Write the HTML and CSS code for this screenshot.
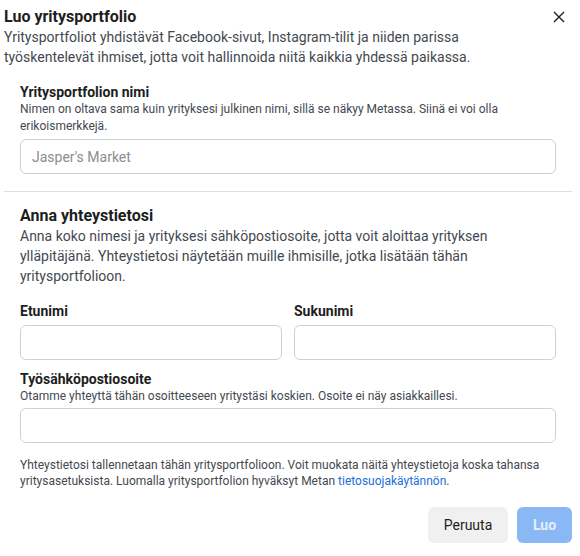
FILE: index.html
```html
<!DOCTYPE html>
<html lang="fi">
<head>
<meta charset="utf-8">
<link rel="stylesheet" href="styles.css">
</head>
<body>
<div class="dialog">
  <div class="header">
    <div class="header-text">
      <h1 class="title">Luo yritysportfolio</h1>
      <p class="lead">Yritysportfoliot yhdistävät Facebook-sivut, Instagram-tilit ja niiden parissa työskentelevät ihmiset, jotta voit hallinnoida niitä kaikkia yhdessä paikassa.</p>
    </div>
    <button class="close" aria-label="Sulje">
      <svg width="12" height="12" viewBox="0 0 12 12"><path d="M1 1L11 11M11 1L1 11" stroke="#1c1e21" stroke-width="1.4" fill="none"/></svg>
    </button>
  </div>

  <div class="section first">
    <div class="label">Yritysportfolion nimi</div>
    <div class="help">Nimen on oltava sama kuin yrityksesi julkinen nimi, sillä se näkyy Metassa. Siinä ei voi olla erikoismerkkejä.</div>
    <input class="field" type="text" placeholder="Jasper's Market">
  </div>

  <div class="divider"></div>

  <div class="section">
    <h2 class="subtitle">Anna yhteystietosi</h2>
    <p class="lead sub">Anna koko nimesi ja yrityksesi sähköpostiosoite, jotta voit aloittaa yrityksen ylläpitäjänä. Yhteystietosi näytetään muille ihmisille, jotka lisätään tähän yritysportfolioon.</p>
    <div class="names">
      <div class="col">
        <div class="label">Etunimi</div>
        <input class="field" type="text">
      </div>
      <div class="col">
        <div class="label">Sukunimi</div>
        <input class="field" type="text">
      </div>
    </div>
    <div class="email">
      <div class="label">Työsähköpostiosoite</div>
      <div class="help">Otamme yhteyttä tähän osoitteeseen yritystäsi koskien. Osoite ei näy asiakkaillesi.</div>
      <input class="field" type="text">
    </div>
    <p class="note">Yhteystietosi tallennetaan tähän yritysportfolioon. Voit muokata näitä yhteystietoja koska tahansa yritysasetuksista. Luomalla yritysportfolion hyväksyt Metan <a href="#" class="link">tietosuojakäytännön</a>.</p>
  </div>

  <div class="actions">
    <button class="btn cancel">Peruuta</button>
    <button class="btn primary">Luo</button>
  </div>
</div>
</body>
</html>
```
FILE: styles.css
```css
* { box-sizing: border-box; }
html, body { margin: 0; padding: 0; background: #fff; }
body {
  font-family: Roboto, "Liberation Sans", Arial, sans-serif;
  color: #1c1e21;
  width: 580px;
  height: 556px;
  overflow: hidden;
}
.dialog {
  padding: 7px 8px 0 4px;
}
.header {
  display: flex;
  align-items: flex-start;
  gap: 8px;
}
.header-text { flex: 1; }
.title {
  margin: 0;
  font-size: 16px;
  line-height: 20px;
  font-weight: 700;
  color: #1c1e21;
}
.lead {
  margin: 0;
  font-size: 14px;
  line-height: 20px;
  color: #444950;
}
.close {
  border: 0;
  background: none;
  padding: 0;
  margin: 4px 7px 0 0;
  width: 12px;
  height: 12px;
  display: flex;
}
.section {
  padding: 0 16px;
}
.section.first { padding-top: 17px; }
.label {
  font-size: 14px;
  line-height: 16px;
  font-weight: 700;
  color: #1c1e21;
}
.help {
  margin-top: 1px;
  font-size: 12px;
  line-height: 17px;
  color: #444950;
}
.field {
  display: block;
  width: 100%;
  height: 35px;
  margin-top: 4px;
  border: 1px solid #ccd0d5;
  border-radius: 6px;
  padding: 0 11px;
  font-family: inherit;
  font-size: 14px;
  color: #1c1e21;
  background: #fff;
  outline: none;
}
.field::placeholder { color: #8a8d91; }
.divider {
  height: 1px;
  background: #dadde1;
  margin: 17px 0 14px;
}
.subtitle {
  margin: 0;
  font-size: 16px;
  line-height: 20px;
  font-weight: 700;
  color: #1c1e21;
}
.names {
  display: grid;
  grid-template-columns: 1fr 1fr;
  gap: 12px;
  margin-top: 17px;
}
.names .field { margin-top: 6px; }
.email { margin-top: 11px; }
.email .field { margin-top: 3px; }
.note {
  margin: 14px 0 0;
  font-size: 12px;
  line-height: 16px;
  color: #444950;
}
.link { color: #216fdb; text-decoration: none; }
.actions {
  display: flex;
  justify-content: flex-end;
  gap: 9px;
  margin-top: 18px;
}
.btn {
  height: 36px;
  border: 0;
  border-radius: 6px;
  font-family: inherit;
  font-size: 14px;
}
.cancel {
  width: 80px;
  background: #f0f0f0;
  color: #1c1e21;
}
.primary {
  width: 55px;
  background: #8ab8f5;
  color: #e4eefc;
  font-weight: 700;
}
```
